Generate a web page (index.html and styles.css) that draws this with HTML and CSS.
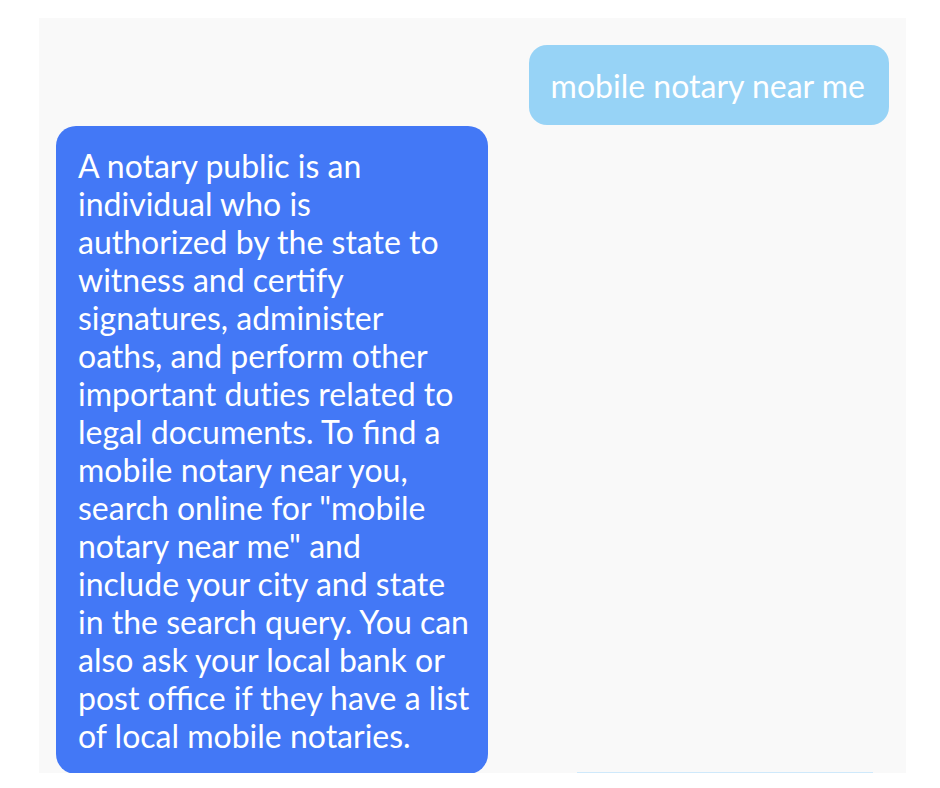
FILE: index.html
```html
<!DOCTYPE html>
<html>
<head>
<meta charset="utf-8">
<link rel="stylesheet" href="styles.css">
</head>
<body>
<div class="panel">
  <div class="row row-user">
    <div class="bubble user">mobile notary near me</div>
  </div>
  <div class="row row-bot">
    <div class="bubble bot">A notary public is an<br>individual who is<br>authorized by the state to<br>witness and certify<br>signatures, administer<br>oaths, and perform other<br>important dut&zwnj;ies related to<br>legal documents. To find a<br>mobile notary near you,<br>search online for "mobile<br>notary near me" and<br>include your city and state<br>in the search query. You can<br>also ask your local bank or<br>post office if they have a list<br>of local mobile notaries.</div>
  </div>
</div>
<div class="peek"></div>
</body>
</html>
```
FILE: styles.css
```css
html, body {
  margin: 0;
  padding: 0;
  background: #ffffff;
}
body {
  font-family: Lato, "Noto Sans", sans-serif;
}
.panel {
  margin: 18px 0 0 39px;
  width: 867px;
  height: 755px;
  background: #f9f9f9;
  overflow: hidden;
  box-sizing: border-box;
  padding: 27px 17px 0 17px;
  display: flex;
  flex-direction: column;
  gap: 1px;
}
.row {
  display: flex;
}
.row-user {
  justify-content: flex-end;
}
.row-bot {
  justify-content: flex-start;
}
.bubble {
  color: #ffffff;
  font-size: 32px;
  line-height: 38px;
}
.user {
  background: #97d3f6;
  border-radius: 18px;
  padding: 22px 24px 20px 22px;
}
.bot {
  background: #4378f6;
  border-radius: 20px;
  width: 432px;
  box-sizing: border-box;
  padding: 21px 10px 19px 22px;
  white-space: nowrap;
}
.peek {
  margin-left: 577px;
  width: 296px;
  height: 1px;
  margin-top: -1px;
  background: #cfe9fb;
}
```
